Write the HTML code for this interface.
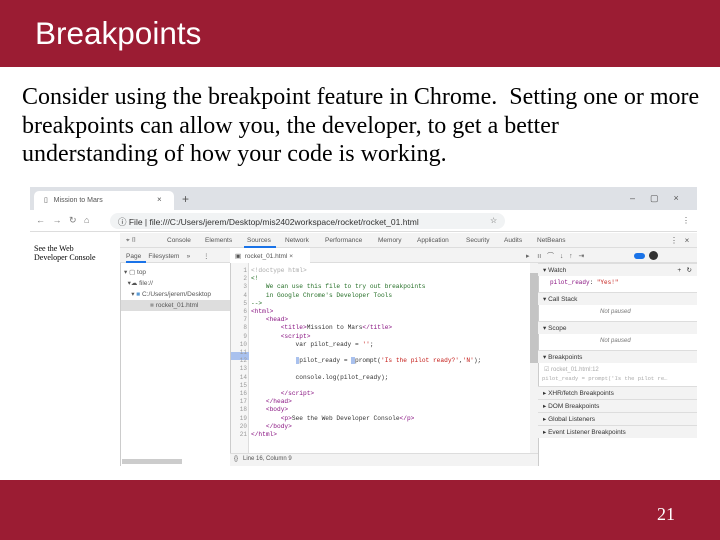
<!DOCTYPE html>
<html><head><meta charset="utf-8"><style>
*{margin:0;padding:0;box-sizing:border-box}
body{width:720px;height:540px;position:relative;background:#fff;overflow:hidden;font-family:"Liberation Sans",sans-serif}
.a{position:absolute}
.hdr{left:0;top:0;width:720px;height:67px;background:#9b1c33}
.ftr{left:0;top:480px;width:720px;height:60px;background:#9b1c33}
.t{font-size:8px;color:#555;white-space:nowrap}
.tab{position:absolute;top:237px;font-size:6.5px;color:#555;white-space:nowrap}
.code{font-family:"Liberation Mono",monospace;font-size:6.2px;white-space:pre;line-height:8.2px;color:#333}
.ln{font-family:"Liberation Mono",monospace;font-size:6px;line-height:8.2px;color:#999;text-align:right;white-space:pre}
.tag{color:#881280}.cm{color:#236e25}.str{color:#c41a16}
.sec{left:538px;width:159px;height:13px;background:#f3f3f3;border-top:1px solid #ddd;font-size:6.5px;color:#333;padding:2px 0 0 5px}
</style></head><body>
<div class="a hdr"></div>
<div class="a" style="left:35px;top:15px;color:#fff;font-size:31.5px;">Breakpoints</div>
<div class="a" style="left:22px;top:83px;white-space:nowrap;font-family:'Liberation Serif',serif;font-size:24px;line-height:28.5px;color:#000">Consider using the breakpoint feature in Chrome.&nbsp; Setting one or more<br>breakpoints can allow you, the developer, to get a better<br>understanding of how your code is working.</div>

<div class="a" style="left:30px;top:187px;width:667px;height:279px;background:#fff;overflow:hidden">
  <div class="a" style="left:0;top:0;width:667px;height:23px;background:#dee1e6"></div>
  <div class="a" style="left:4px;top:4px;width:140px;height:19px;background:#fff;border-radius:5px 5px 0 0"></div>
  <div class="a t" style="left:14px;top:9px;font-size:7px">▯&nbsp;&nbsp; Mission to Mars</div>
  <div class="a t" style="left:127px;top:8px">×</div>
  <div class="a t" style="left:152px;top:5px;font-size:12px">+</div>
  <div class="a t" style="left:600px;top:6px;font-size:9px">–&nbsp;&nbsp;&nbsp;&nbsp;&nbsp;&nbsp;▢&nbsp;&nbsp;&nbsp;&nbsp;&nbsp;&nbsp;×</div>
  <div class="a" style="left:0;top:23px;width:667px;height:22px;background:#fff;border-bottom:1px solid #ddd"></div>
  <div class="a t" style="left:6px;top:28px;font-size:9px;color:#777">←&nbsp;&nbsp;&nbsp;→&nbsp;&nbsp;&nbsp;↻&nbsp;&nbsp;&nbsp;⌂</div>
  <div class="a" style="left:80px;top:26px;width:395px;height:16px;background:#f1f3f4;border-radius:8px"></div>
  <div class="a t" style="left:88px;top:29px;font-size:8.5px;color:#333">ⓘ File | file:///C:/Users/jerem/Desktop/mis2402workspace/rocket/rocket_01.html</div>
  <div class="a t" style="left:460px;top:29px">☆</div>
  <div class="a t" style="left:652px;top:29px">⋮</div>
  <div class="a" style="left:4px;top:57px;font-family:'Liberation Serif',serif;font-size:8px;line-height:9px;color:#000">See the Web<br>Developer Console</div>
  <div class="a" style="left:90px;top:46px;width:577px;height:233px;background:#fff;border-left:1px solid #ccc"></div>
  <div class="a" style="left:90px;top:46px;width:577px;height:15px;background:#f3f3f3;border-bottom:1px solid #ddd"></div>
  <div class="a t" style="left:96px;top:50px;font-size:6.5px">⌖ ▯</div>
  <div class="a t" style="left:640px;top:49px;font-size:8px">⋮&nbsp;&nbsp; ×</div>
  <div class="a" style="left:90px;top:61px;width:577px;height:15px;background:#f3f3f3;border-bottom:1px solid #ddd"></div>
  <div class="a t" style="left:96px;top:65px;font-size:6.5px">Page&nbsp;&nbsp;&nbsp; Filesystem&nbsp;&nbsp;&nbsp; »&nbsp;&nbsp;&nbsp;&nbsp;&nbsp;&nbsp; ⋮</div>
  <div class="a" style="left:96px;top:74px;width:20px;height:2px;background:#1a73e8"></div>
  <div class="a" style="left:200px;top:61px;width:1px;height:218px;background:#ccc"></div>
  <div class="a" style="left:200px;top:61px;width:80px;height:15px;background:#fff"></div>
  <div class="a t" style="left:205px;top:65px;font-size:6.5px">▣&nbsp; rocket_01.html ×</div>
  <div class="a t" style="left:496px;top:64px;font-size:7px;color:#666">▸&nbsp;&nbsp;&nbsp; ıı&nbsp;&nbsp; ⌒&nbsp;&nbsp; ↓&nbsp;&nbsp; ↑&nbsp;&nbsp; ⇥</div>
  <div class="a" style="left:604px;top:66px;width:11px;height:6px;background:#1a73e8;border-radius:3px"></div>
  <div class="a" style="left:619px;top:64px;width:9px;height:9px;background:#333;border-radius:50%"></div>
  <div class="a t" style="left:94px;top:80px;font-size:6.5px;line-height:11px">▾ ▢ top<br>&nbsp;&nbsp;▾☁ file://<br>&nbsp;&nbsp;&nbsp;&nbsp;▾ <span style="color:#5b9bd5">■</span> C:/Users/jerem/Desktop</div>
  <div class="a" style="left:91px;top:113px;width:109px;height:11px;background:#ddd"></div>
  <div class="a t" style="left:120px;top:115px;font-size:6.5px"><span style="color:#999">■</span> rocket_01.html</div>
  <div class="a" style="left:92px;top:272px;width:60px;height:5px;background:#ccc"></div>
  <div class="a" style="left:201px;top:76px;width:18px;height:190px;background:#f6f6f6;border-right:1px solid #ddd"></div>
  <div class="a" style="left:201px;top:165px;width:18px;height:8px;background:#a9c1ee"></div>
  <div class="a ln" style="left:201px;top:80px;width:16px">1
2
3
4
5
6
7
8
9
10
11
12
13
14
15
16
17
18
19
20
21</div>
  <div class="a code" style="left:221px;top:80px"><span style="color:#aaa">&lt;!doctype html&gt;</span>
<span class="cm">&lt;!
    We can use this file to try out breakpoints
    in Google Chrome's Developer Tools
--&gt;</span>
<span class="tag">&lt;html&gt;</span>
    <span class="tag">&lt;head&gt;</span>
        <span class="tag">&lt;title&gt;</span>Mission to Mars<span class="tag">&lt;/title&gt;</span>
        <span class="tag">&lt;script&gt;</span>
            var pilot_ready = <span class="str">''</span>;

            <span style="background:#a9c1ee"> </span>pilot_ready = <span style="background:#a9c1ee"> </span>prompt(<span class="str">'Is the pilot ready?'</span>,<span class="str">'N'</span>);

            console.log(pilot_ready);

        <span class="tag">&lt;/script&gt;</span>
    <span class="tag">&lt;/head&gt;</span>
    <span class="tag">&lt;body&gt;</span>
        <span class="tag">&lt;p&gt;</span>See the Web Developer Console<span class="tag">&lt;/p&gt;</span>
    <span class="tag">&lt;/body&gt;</span>
<span class="tag">&lt;/html&gt;</span></div>
  <div class="a" style="left:500px;top:76px;width:8px;height:190px;background:#f3f3f3"></div>
  <div class="a" style="left:500px;top:86px;width:8px;height:90px;background:#c4c4c4"></div>
  <div class="a" style="left:200px;top:266px;width:308px;height:13px;background:#f3f3f3;border-top:1px solid #ddd"></div>
  <div class="a t" style="left:204px;top:269px;font-size:6px">{}&nbsp;&nbsp; Line 16, Column 9</div>
  <div class="a" style="left:508px;top:76px;width:1px;height:203px;background:#ccc"></div>
</div>
<div class="tab" style="left:167px">Console</div>
<div class="tab" style="left:205px">Elements</div>
<div class="tab" style="left:247px">Sources</div>
<div class="tab" style="left:285px">Network</div>
<div class="tab" style="left:325px">Performance</div>
<div class="tab" style="left:378px">Memory</div>
<div class="tab" style="left:417px">Application</div>
<div class="tab" style="left:466px">Security</div>
<div class="tab" style="left:504px">Audits</div>
<div class="tab" style="left:537px">NetBeans</div>
<div class="a" style="left:244px;top:246px;width:32px;height:2px;background:#1a73e8"></div>
<div class="a sec" style="top:263px">▾ Watch<span style="float:right;padding-right:5px">+&nbsp;&nbsp; ↻</span></div>
<div class="a code" style="left:550px;top:279px;font-size:6px"><span class="tag">pilot_ready</span>: <span class="str">"Yes!"</span></div>
<div class="a sec" style="top:292px">▾ Call Stack</div>
<div class="a t" style="left:600px;top:309px;font-size:6px;font-style:italic;color:#777">Not paused</div>
<div class="a sec" style="top:321px">▾ Scope</div>
<div class="a t" style="left:600px;top:338px;font-size:6px;font-style:italic;color:#777">Not paused</div>
<div class="a sec" style="top:350px">▾ Breakpoints</div>
<div class="a t" style="left:544px;top:366px;font-size:6px;color:#aaa">☑ rocket_01.html:12</div>
<div class="a code" style="left:542px;top:375px;font-size:5.5px;color:#aaa">pilot_ready = prompt('Is the pilot re…</div>
<div class="a sec" style="top:386px">▸ XHR/fetch Breakpoints</div>
<div class="a sec" style="top:399px">▸ DOM Breakpoints</div>
<div class="a sec" style="top:412px">▸ Global Listeners</div>
<div class="a sec" style="top:425px">▸ Event Listener Breakpoints</div>

<div class="a ftr"></div>
<div class="a" style="left:657px;top:504px;color:#fff;font-family:'Liberation Serif',serif;font-size:18px">21</div>
</body></html>
